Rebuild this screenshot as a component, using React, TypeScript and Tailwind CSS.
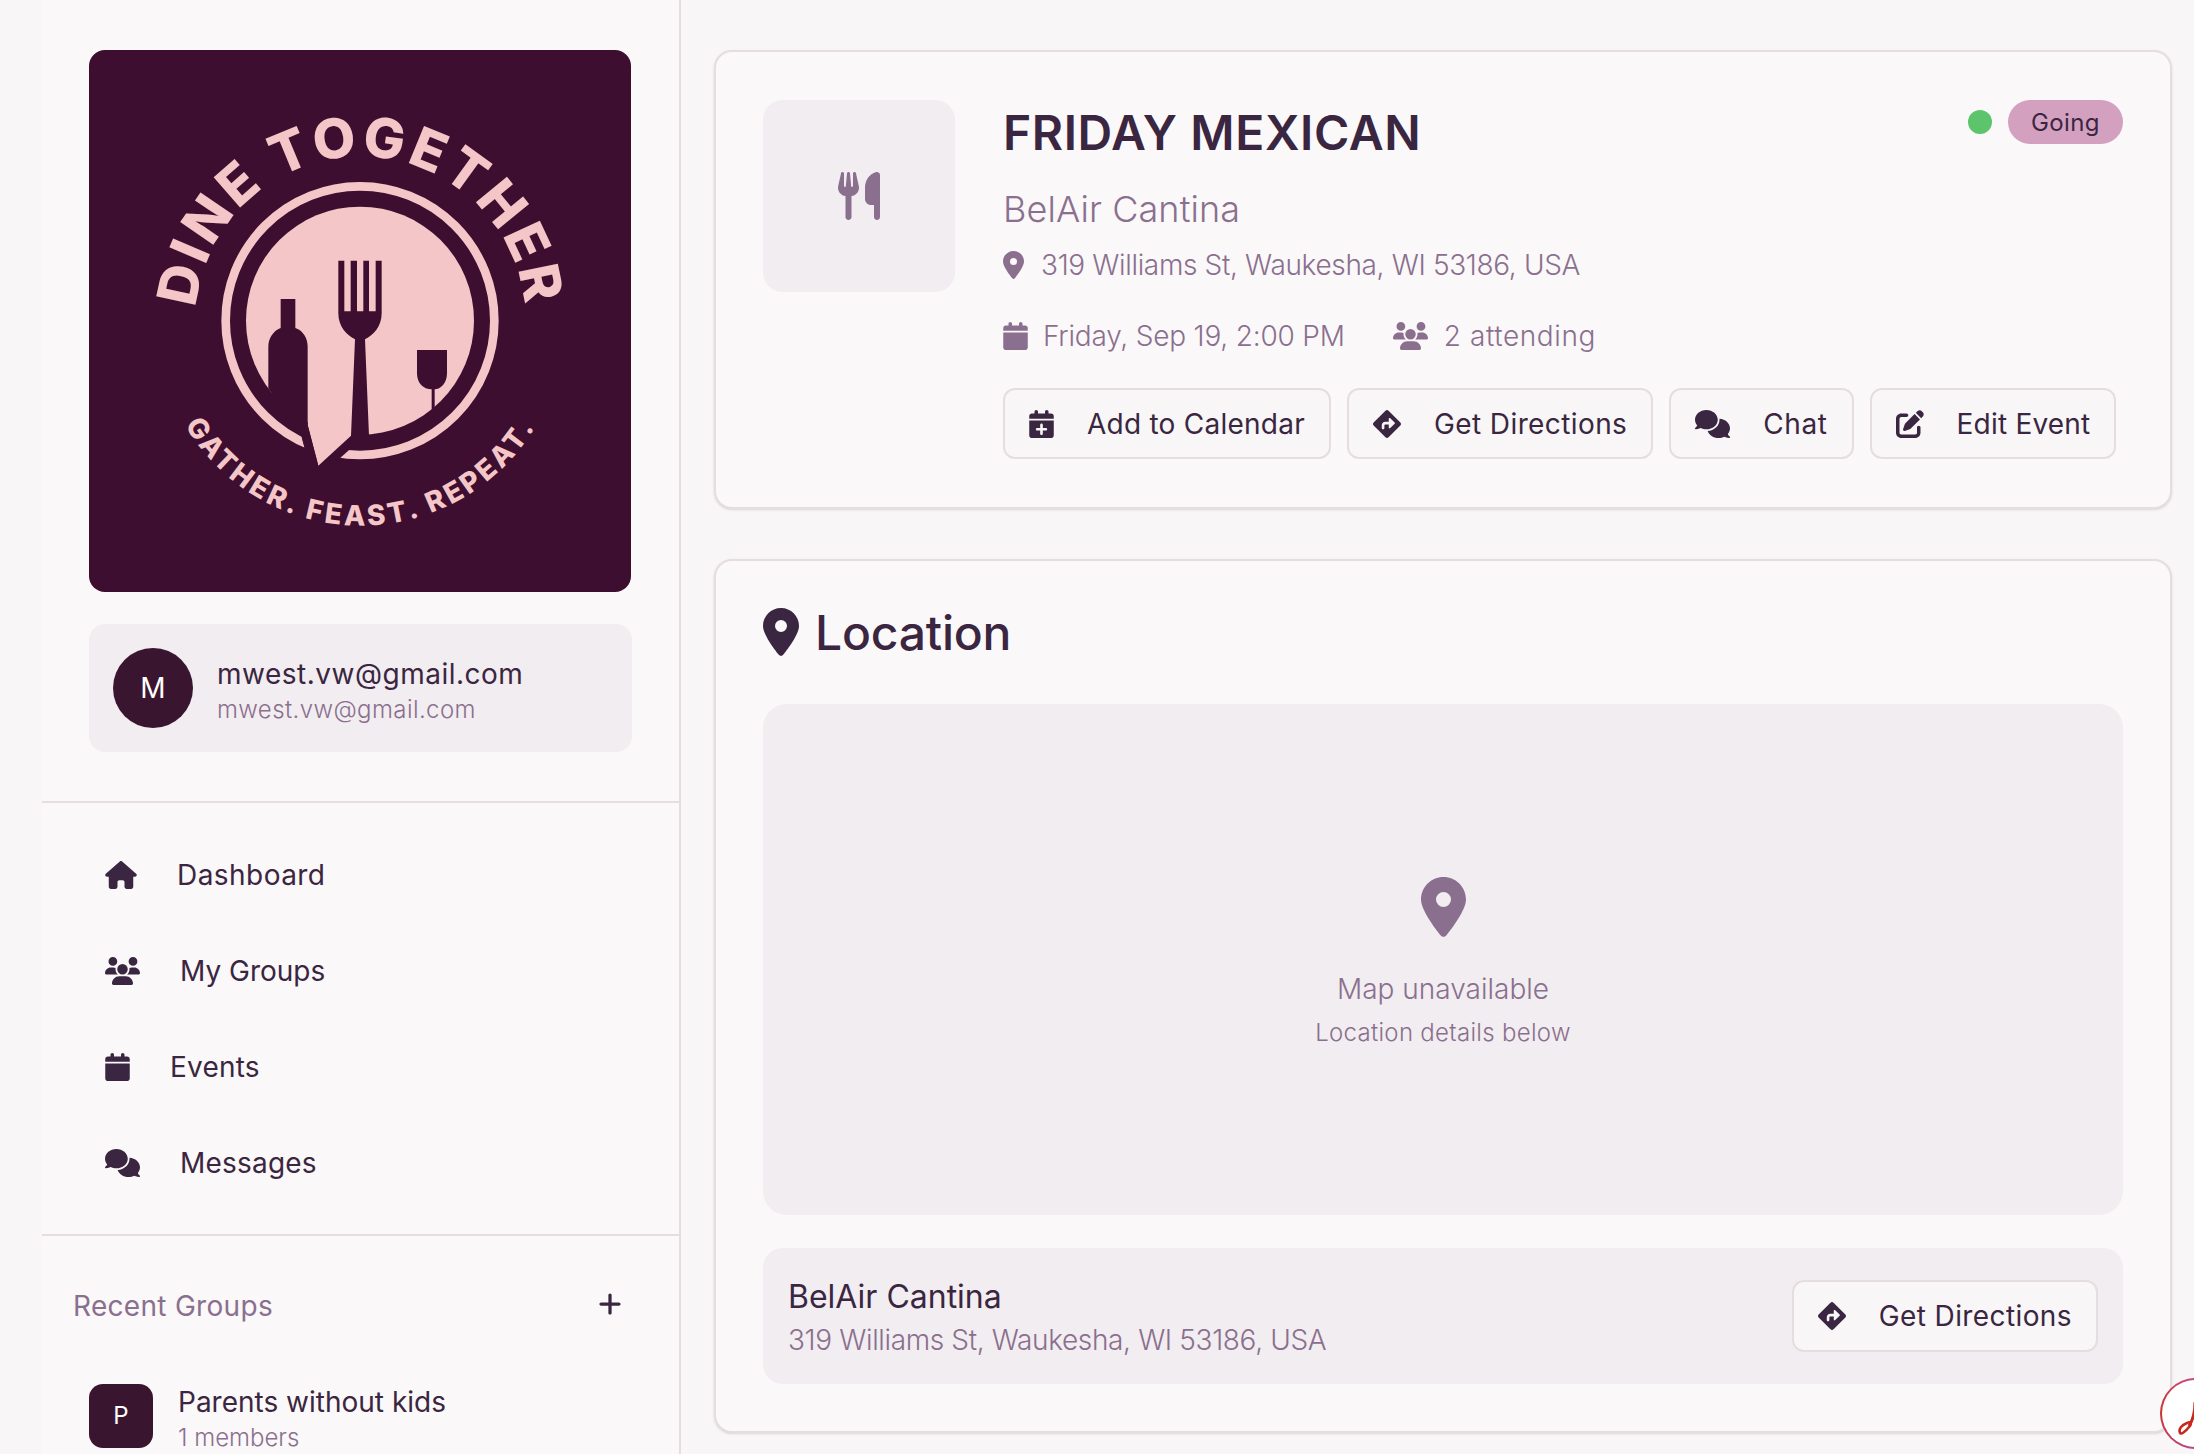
import React from "react";
import {
  FaHouse,
  FaUsers,
  FaCalendar,
  FaComments,
  FaLocationDot,
  FaUtensils,
  FaCalendarPlus,
  FaDiamondTurnRight,
  FaPenToSquare,
  FaPlus,
} from "react-icons/fa6";

const PINK = "#f5c6c8";
const DARK = "#3d0e2f";

function Logo() {
  return (
    <div className="w-[542px] h-[542px] rounded-[16px] bg-[#3d0e2f] shrink-0 overflow-hidden">
      <svg viewBox="0 0 542 542" width="542" height="542">
        <defs>
          <path id="topArcFull" d="M 106.5 271.5 A 165 165 0 1 1 436.5 271.5" />
          <path id="botArc" d="M 67.5 271.5 A 204 204 0 0 0 475.5 271.5" />
        </defs>
        <text fontFamily="Inter, sans-serif" fontWeight="800" fontSize="55" fill={PINK} letterSpacing="3.6" textAnchor="middle">
          <textPath href="#topArcFull" startOffset="50%">DINE TOGETHER</textPath>
        </text>
        <text fontFamily="Inter, sans-serif" fontWeight="800" fontSize="28" fill={PINK} letterSpacing="3.2" textAnchor="middle">
          <textPath href="#botArc" startOffset="50%">GATHER. FEAST. REPEAT.</textPath>
        </text>
        <g transform="translate(111 120) scale(0.33333)">
          <circle cx="480" cy="452" r="403" fill="none" stroke={PINK} strokeWidth="26" />
          <path d="M305 800 L314 835 L340 915 L418 866 L470 820 L453 797 Z" fill={DARK} />
          <circle cx="480" cy="452" r="342" fill={PINK} />
          <path d="M323 600 V765 L355 887 L453 797 L470 600 Z" fill={PINK} />
          <path d="M242 387 H286 V474 C310 482 323 505 323 530 V765 L355 887 L314 835 L305 800 L205 655 V530 C205 505 220 482 242 474 Z" fill={DARK} />
          <path d="M415 272 H433 V424 H452 V272 H471 V424 H490 V272 H507 V424 H527 V272 H545 V430 C545 470 520 495 495 508 L507 797 L453 797 L465 508 C440 495 415 470 415 430 Z" fill={DARK} />
          <path d="M651 540 H741 V610 C741 640 722 658 704 658 V716 L695 724 V658 C670 658 651 640 651 610 Z" fill={DARK} />
        </g>
      </svg>
    </div>
  );
}

function NavItem({ icon, label, tracking }: { icon: React.ReactNode; label: string; tracking: string }) {
  return (
    <div className="h-[96px] flex items-center gap-[40px] pl-[63px] text-[28px] text-[#3a2640]">
      {icon}
      <span className={tracking}>{label}</span>
    </div>
  );
}

function ActionButton({ icon, label, className }: { icon: React.ReactNode; label: string; className: string }) {
  return (
    <button className={`flex shrink-0 whitespace-nowrap items-center gap-[33px] px-[24px] border-2 border-[#e5dde0] rounded-[12px] bg-[#f8f6f7] text-[28px] font-normal text-[#3a2640] ${className}`}>
      {icon}
      <span>{label}</span>
    </button>
  );
}

export default function App() {
  return (
    <div
      className="relative w-[2194px] h-[1454px] overflow-hidden bg-[#f8f6f7] flex pl-[42px]"
      style={{ fontFamily: "Inter, 'Noto Sans', sans-serif" }}
    >
      <aside className="w-[639px] h-full shrink-0 bg-[#faf8f9] border-r-2 border-[#e5dde0] flex flex-col">
        <div className="pt-[50px] px-[47px] pb-[49px] border-b-2 border-[#e5dde0]">
          <Logo />
          <div className="mt-[32px] h-[128px] rounded-[16px] bg-[#f1edf0] flex items-center pl-[24px] gap-[24px]">
            <div className="w-[80px] h-[80px] rounded-full bg-[#3a152f] text-white flex items-center justify-center text-[28px]">M</div>
            <div className="flex flex-col pt-[6px]">
              <span className="text-[28px] leading-[36px] tracking-[0.5px] text-[#3a2640]">mwest.vw@gmail.com</span>
              <span className="text-[24px] leading-[35px] tracking-[0.4px] font-light text-[#8b6f8e]">mwest.vw@gmail.com</span>
            </div>
          </div>
        </div>
        <nav className="pt-[24px] pb-[23px] border-b-2 border-[#e5dde0]">
          <NavItem icon={<FaHouse className="w-[32px] h-[28px] shrink-0" />} label="Dashboard" tracking="tracking-[0.45px]" />
          <NavItem icon={<FaUsers className="w-[35px] h-[28px] shrink-0" />} label="My Groups" tracking="tracking-[0px]" />
          <NavItem icon={<FaCalendar className="w-[25px] h-[28px] shrink-0" />} label="Events" tracking="tracking-[0.2px]" />
          <NavItem icon={<FaComments className="w-[35px] h-[28px] shrink-0" />} label="Messages" tracking="tracking-[0.2px]" />
        </nav>
        <div className="flex-1 pl-[31px] pr-[56px] pt-[52px]">
          <div className="h-[36px] flex items-center justify-between">
            <span className="text-[28px] tracking-[0.3px] text-[#8b6f8e]">Recent Groups</span>
            <FaPlus className="w-[26px] h-[26px] text-[#3a2640] -translate-y-[2px]" />
          </div>
          <div className="mt-[60px] ml-[16px] flex items-start gap-[25px]">
            <div className="w-[64px] h-[64px] rounded-[14px] bg-[#3a152f] text-white flex items-center justify-center text-[24px] shrink-0">P</div>
            <div className="flex flex-col">
              <span className="text-[28px] leading-[36px] text-[#3a2640]">Parents without kids</span>
              <span className="text-[24px] leading-[36px] font-light text-[#8b6f8e]">1 members</span>
            </div>
          </div>
        </div>
      </aside>

      <main className="flex-1 pl-[33px] pr-[22px] pt-[50px] flex flex-col gap-[50px]">
        <section className="h-[459px] rounded-[18px] border-2 border-[#e5dde0] bg-[#faf8f9] shadow-sm px-[47px] pt-[48px] flex gap-[48px]">
          <div className="w-[192px] h-[192px] rounded-[20px] bg-[#f1edf0] flex items-center justify-center shrink-0 text-[#8b6f8e]">
            <FaUtensils className="w-[42px] h-[48px]" />
          </div>
          <div className="flex-1 flex flex-col relative">
            <h1 className="h-[66px] leading-[66px] text-[48px] font-semibold tracking-[0.6px] text-[#3a2640]">FRIDAY MEXICAN</h1>
            <div className="mt-[21px] h-[44px] leading-[44px] text-[36px] font-light tracking-[0.1px] text-[#8b6f8e]">BelAir Cantina</div>
            <div className="mt-[16px] h-[36px] flex items-center gap-[17px] text-[28px] font-light text-[#8b6f8e]">
              <FaLocationDot className="w-[21px] h-[28px] shrink-0" />
              <span className="tracking-[-0.34px]">319 Williams St, Waukesha, WI 53186, USA</span>
            </div>
            <div className="mt-[35px] h-[36px] flex items-center text-[28px] font-light text-[#8b6f8e]">
              <FaCalendar className="w-[25px] h-[28px] shrink-0" />
              <span className="ml-[15px] tracking-[-0.2px]">Friday, Sep 19, 2:00 PM</span>
              <FaUsers className="ml-[48px] w-[35px] h-[28px] shrink-0" />
              <span className="ml-[16px] tracking-[0.6px]">2 attending</span>
            </div>
            <div className="mt-[34px] flex gap-[16px]">
              <ActionButton className="h-[71px] w-[328px] tracking-[0.25px]" icon={<FaCalendarPlus className="w-[25px] h-[28px] shrink-0" />} label="Add to Calendar" />
              <ActionButton className="h-[71px] tracking-[0.4px]" icon={<FaDiamondTurnRight className="w-[28px] h-[28px] shrink-0" />} label="Get Directions" />
              <ActionButton className="h-[71px] tracking-[0.6px]" icon={<FaComments className="w-[35px] h-[28px] shrink-0" />} label="Chat" />
              <ActionButton className="h-[71px] tracking-[0.2px]" icon={<FaPenToSquare className="w-[28px] h-[28px] shrink-0" />} label="Edit Event" />
            </div>
            <div className="absolute top-0 right-0 flex items-center gap-[16px]">
              <span className="w-[24px] h-[24px] rounded-full bg-[#5cc46a]" />
              <span className="h-[44px] w-[115px] pt-[2px] rounded-full bg-[#d4a0c0] text-[#3a2640] text-[24px] tracking-[0.4px] flex items-center justify-center">Going</span>
            </div>
          </div>
        </section>

        <section className="h-[874px] rounded-[18px] border-2 border-[#e5dde0] bg-[#faf8f9] shadow-sm px-[47px] pt-[47px]">
          <div className="h-[48px] flex items-center gap-[16px] text-[#3a2640]">
            <FaLocationDot className="w-[36px] h-[48px] shrink-0" />
            <h2 className="text-[48px] leading-[48px] font-medium tracking-[-0.2px] pt-[2px]">Location</h2>
          </div>
          <div className="mt-[48px] h-[511px] rounded-[24px] bg-[#f1edf0] flex flex-col items-center pt-[173px] text-[#8b6f8e]">
            <FaLocationDot className="w-[45px] h-[60px]" />
            <div className="mt-[34px] text-[28px] leading-[36px] font-light">Map unavailable</div>
            <div className="mt-[9px] text-[24px] leading-[34px] font-light tracking-[0.3px]">Location details below</div>
          </div>
          <div className="mt-[33px] h-[136px] rounded-[20px] bg-[#f1edf0] flex items-center justify-between px-[25px]">
            <div className="flex flex-col pt-[3px]">
              <span className="text-[32px] leading-[40px] text-[#3a2640]">BelAir Cantina</span>
              <span className="mt-[5px] text-[28px] leading-[36px] font-light tracking-[-0.36px] text-[#8b6f8e]">319 Williams St, Waukesha, WI 53186, USA</span>
            </div>
            <ActionButton className="h-[72px] tracking-[0.4px]" icon={<FaDiamondTurnRight className="w-[28px] h-[28px] shrink-0" />} label="Get Directions" />
          </div>
        </section>
      </main>

      <div className="absolute left-[2160px] top-[1378px] w-[71px] h-[71px] rounded-full p-[2px] bg-[conic-gradient(#cc4a80_0deg,#b84a90_180deg,#c8362c_270deg,#cc4a80_360deg)]">
        <div className="w-full h-full rounded-full bg-white">
          <svg viewBox="0 0 67 67" width="67" height="67" fill="none">
            <path d="M18 53 C16 49 20 45 25 43 C29 41 30 44 27 47 C24 51 19 55 18 53 Z" stroke="#c8281e" strokeWidth="2.5" />
            <path d="M27 46 C31 40 33 32 33 22" stroke="#c8281e" strokeWidth="3" />
          </svg>
        </div>
      </div>
    </div>
  );
}
